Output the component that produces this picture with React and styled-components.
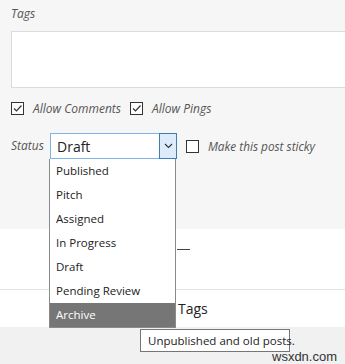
import React from 'react';
import styled, { createGlobalStyle } from 'styled-components';

const GlobalStyle = createGlobalStyle`
  body {
    margin: 0;
    background: #f1f1f1;
    font-family: "Open Sans", "Noto Sans", sans-serif;
  }
`;

const statuses = ['Published', 'Pitch', 'Assigned', 'In Progress', 'Draft', 'Pending Review', 'Archive'];

function Checkbox({ checked }) {
  return (
    <Box>
      {checked && (
        <svg width="11" height="11" viewBox="0 0 11 11">
          <path d="M2 5.5 L4.5 8 L9.5 2.5" fill="none" stroke="#333" strokeWidth="1.2" />
        </svg>
      )}
    </Box>
  );
}

function App() {
  return (
    <Page>
      <GlobalStyle />
      <TopSection>
        <FieldLabel>Tags</FieldLabel>
        <TagsArea />
        <CheckRow>
          <Checkbox checked />
          <FieldLabel>Allow Comments</FieldLabel>
          <Checkbox checked />
          <FieldLabel>Allow Pings</FieldLabel>
        </CheckRow>
        <StatusRow>
          <StatusLabel>Status</StatusLabel>
          <SelectBox>
            <SelectValue>Draft</SelectValue>
            <ArrowButton>
              <svg width="9" height="6" viewBox="0 0 9 6">
                <path d="M1 1 L4.5 4.5 L8 1" fill="none" stroke="#333" strokeWidth="1.1" />
              </svg>
            </ArrowButton>
            <Dropdown>
              {statuses.map((s) => (
                <Option key={s} $active={s === 'Archive'}>{s}</Option>
              ))}
            </Dropdown>
          </SelectBox>
          <StickyBox>
            <Checkbox />
          </StickyBox>
          <StickyLabel>Make this post sticky</StickyLabel>
        </StatusRow>
      </TopSection>
      <WhiteSection>
        <Dash />
        <Divider />
        <TagsTab>Tags</TagsTab>
      </WhiteSection>
      <BottomSection />
      <Tooltip>Unpublished and old posts.</Tooltip>
      <Watermark>wsxdn.com</Watermark>
    </Page>
  );
}

const Page = styled.div`
  position: relative;
  width: 345px;
  height: 364px;
  overflow: hidden;
`;

const TopSection = styled.div`
  box-sizing: border-box;
  height: 229px;
  background: #f6f6f6;
  padding: 6px 0 0 11px;
`;

const FieldLabel = styled.span`
  font-size: 12px;
  line-height: 16px;
  font-style: italic;
  color: #555;
  display: block;
  white-space: nowrap;
`;

const StatusLabel = styled(FieldLabel)`
  width: 39px;
  flex-shrink: 0;
`;

const StickyLabel = styled(FieldLabel)`
  font-size: 11.8px;
`;

const TagsArea = styled.div`
  box-sizing: border-box;
  margin-top: 9px;
  width: 360px;
  height: 57px;
  background: #fff;
  border: 1px solid #dcdcdc;
`;

const CheckRow = styled.div`
  display: flex;
  align-items: center;
  margin-top: 14px;
  height: 13px;

  & > span:nth-of-type(1) {
    margin: 0 9px 0 9px;
  }
  & > span:nth-of-type(2) {
    margin-left: 9px;
  }
`;

const Box = styled.div`
  box-sizing: border-box;
  width: 13px;
  height: 13px;
  border: 1px solid #333;
  background: #fff;
  display: flex;
  align-items: center;
  justify-content: center;
  flex-shrink: 0;
`;

const StatusRow = styled.div`
  display: flex;
  align-items: center;
  margin-top: 18px;
  height: 26px;
`;

const SelectBox = styled.div`
  position: relative;
  box-sizing: border-box;
  width: 127px;
  height: 26px;
  background: #fff;
  border: 1px solid #7eb4ea;
  display: flex;
  align-items: center;
`;

const SelectValue = styled.span`
  flex: 1;
  padding-left: 6px;
  font-size: 14px;
  color: #222;
`;

const ArrowButton = styled.div`
  box-sizing: border-box;
  width: 18px;
  height: 26px;
  margin: -1px -1px -1px 0;
  background: #dcecfc;
  border: 1px solid #3c7fb1;
  display: flex;
  align-items: center;
  justify-content: center;
`;

const Dropdown = styled.div`
  position: absolute;
  left: -2px;
  top: 25px;
  box-sizing: border-box;
  width: 127px;
  background: #fff;
  border: 1px solid #8a8a8a;
  border-top: none;
  z-index: 2;
`;

const Option = styled.div`
  height: 24px;
  line-height: 24px;
  padding-left: 6px;
  font-size: 11.5px;
  color: ${(p) => (p.$active ? '#fff' : '#222')};
  background: ${(p) => (p.$active ? '#767676' : '#fff')};
`;

const StickyBox = styled.div`
  margin: 0 9px 0 9px;
`;

const WhiteSection = styled.div`
  height: 98px;
  background: #fff;
  display: flex;
  flex-direction: column;
`;

const Dash = styled.div`
  margin: 20px 0 0 177px;
  width: 13px;
  border-top: 1.5px solid #444;
`;

const Divider = styled.div`
  margin-top: 39px;
  border-top: 1px solid #e5e5e5;
`;

const TagsTab = styled.div`
  margin: 10px 0 0 178px;
  font-size: 14px;
  line-height: 18px;
  color: #222;
`;

const BottomSection = styled.div`
  height: 37px;
  background: #f1f1f1;
`;

const Tooltip = styled.div`
  position: absolute;
  left: 140px;
  top: 329px;
  box-sizing: border-box;
  width: 150px;
  height: 23px;
  line-height: 21px;
  padding-left: 7px;
  background: #fff;
  border: 1px solid #767676;
  font-size: 11.5px;
  color: #222;
  white-space: nowrap;
  z-index: 3;
`;

const Watermark = styled.div`
  position: absolute;
  left: 272px;
  top: 352px;
  font-family: "Liberation Sans", sans-serif;
  font-size: 13px;
  line-height: 10px;
  color: #333;
  z-index: 4;
`;

export default App;
